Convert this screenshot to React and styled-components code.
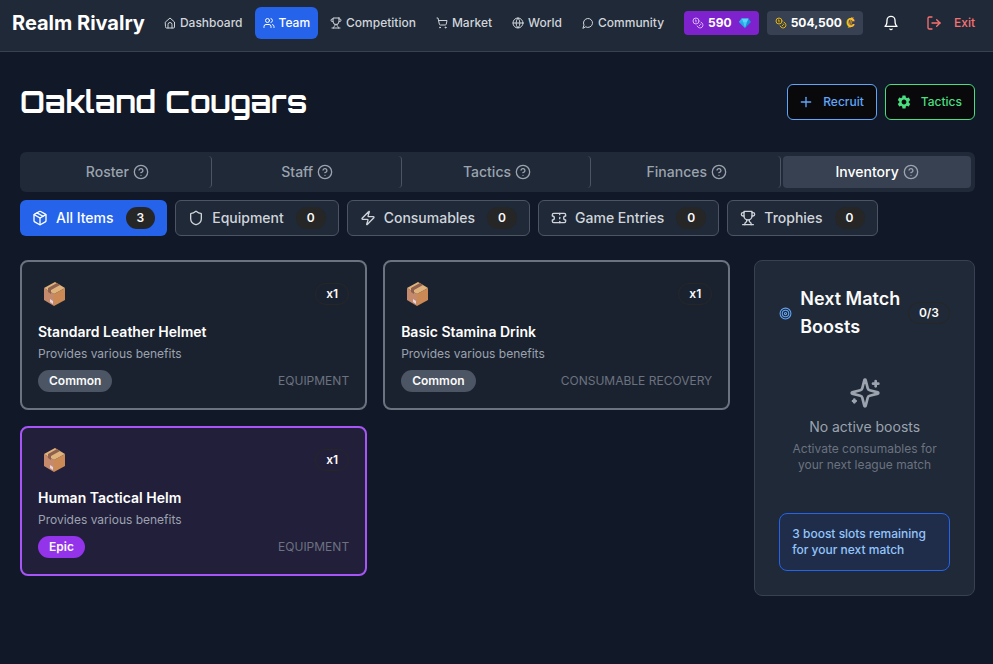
import React from "react";
import styled, { createGlobalStyle, css } from "styled-components";
import {
  Users, ShoppingCart, Globe, Coins, LogOut, Plus, CircleHelp, Package, Shield, Zap, Ticket, Target,
} from "lucide-react";
import { MdSettings } from "react-icons/md";

const GlobalStyle = createGlobalStyle`
  *, *::before, *::after { box-sizing: border-box; }
  body {
    margin: 0;
    background: #111827;
    color: #ffffff;
    font-family: Inter, "Liberation Sans", sans-serif;
    font-size: 12px;
    line-height: 16px;
  }
  h1, h2, h3, p { margin: 0; }
  button { font: inherit; color: inherit; cursor: pointer; }
  svg { flex: none; display: block; }
`;

const TopBar = styled.header`
  display: flex;
  align-items: center;
  padding: 7px 18px 12px 12px;
  background: #1f2937;
  border-bottom: 1px solid #374151;
`;

const Brand = styled.a`
  margin-right: 11px;
  color: #ffffff;
  font-size: 20px;
  font-weight: 700;
  line-height: 28px;
  text-decoration: none;
  white-space: nowrap;
`;

const Nav = styled.nav`
  display: flex;
  gap: 4px;
`;

const NavLink = styled.a`
  display: flex;
  align-items: center;
  gap: 4px;
  height: 32px;
  padding: 0 8px;
  border-radius: 6px;
  background: ${(p) => (p.$active ? "#2563eb" : "transparent")};
  color: ${(p) => (p.$active ? "#ffffff" : "#d1d5db")};
  font-weight: 500;
  text-decoration: none;
`;

const Wallet = styled.div`
  display: flex;
  gap: 8px;
  margin-left: 12px;
`;

const Balance = styled.div`
  display: flex;
  align-items: center;
  gap: 4px;
  height: 24px;
  padding: 0 8px;
  border-radius: 4px;
  background: ${(p) => (p.$premium ? "#7e22ce" : "#374151")};
  font-weight: 700;
  white-space: nowrap;
  & > svg:first-child { color: ${(p) => (p.$premium ? "#d8b4fe" : "#eab308")}; }
  & > svg:last-child { margin-left: 3px; }
`;

const CoinSign = styled.span`
  color: #fbbf24;
  font-weight: 700;
`;

const Account = styled.div`
  display: flex;
  flex: 1;
  align-items: center;
  justify-content: space-between;
  margin-left: 20px;
`;

const PlainButton = styled.button`
  display: flex;
  align-items: center;
  gap: 12px;
  padding: 0;
  border: 0;
  background: none;
  color: ${(p) => (p.$danger ? "#f87171" : "#ffffff")};
  font-weight: 500;
`;

const Main = styled.main`
  padding: 32px 18px 32px 20px;
`;

const TitleRow = styled.div`
  display: flex;
  align-items: center;
  justify-content: space-between;
  margin-bottom: 32px;
`;

const TeamName = styled.h1`
  font-family: Orbitron, "DejaVu Sans", sans-serif;
  font-size: 30px;
  font-weight: 700;
  line-height: 36px;
`;

const Actions = styled.div`
  display: flex;
  gap: 8px;
`;

const ActionButton = styled.button`
  display: flex;
  align-items: center;
  gap: 9px;
  height: 36px;
  padding: 0 12px 0 10px;
  border: 1px solid ${(p) => p.$tone};
  border-radius: 6px;
  background: #09090b;
  color: ${(p) => p.$tone};
  font-weight: 500;
`;

const Tabs = styled.div`
  display: grid;
  grid-template-columns: repeat(5, 1fr);
  gap: 2px;
  padding: 4px;
  border-radius: 6px;
  background: #1f2937;
`;

const Tab = styled.button`
  display: flex;
  align-items: center;
  justify-content: center;
  gap: 4px;
  height: 32px;
  padding: 0;
  border: 0;
  border-radius: 4px;
  background: none;
  color: #9ca3af;
  font-size: 14px;
  font-weight: 500;
  & > svg { color: #9ca3af; }
  ${(p) => p.$active
    ? css`background: #374151; color: #ffffff;`
    : css`border-right: 1px solid #4b5563;`}
`;

const Filters = styled.div`
  display: flex;
  flex-wrap: wrap;
  gap: 8px;
  margin: 8px 0 24px;
`;

const Filter = styled.button`
  display: flex;
  align-items: center;
  gap: 8px;
  height: 36px;
  padding: 0 12px;
  border: ${(p) => (p.$active ? "0" : "1px solid #4b5563")};
  border-radius: 6px;
  background: ${(p) => (p.$active ? "#2563eb" : "#1f2937")};
  color: ${(p) => (p.$active ? "#ffffff" : "#d1d5db")};
  font-size: 14px;
  font-weight: 500;
`;

const Pill = styled.span`
  padding: 2px 10px;
  border: 1px solid ${(p) => p.$border || "transparent"};
  border-radius: 11px;
  background: ${(p) => p.$fill || "transparent"};
  color: #fafafa;
  font-size: 12px;
  font-weight: 600;
  line-height: 16px;
  white-space: nowrap;
`;

const CountPill = styled(Pill)`
  margin-left: 4px;
`;

const Columns = styled.div`
  display: grid;
  grid-template-columns: repeat(4, minmax(0, 1fr));
  align-items: start;
  gap: 24px;
`;

const ItemGrid = styled.section`
  display: grid;
  grid-column: span 3;
  grid-template-columns: repeat(2, minmax(0, 1fr));
  gap: 16px;
`;

const ItemCard = styled.article`
  padding: 16px;
  border: 2px solid ${(p) => (p.$epic ? "#a855f7" : "#6b7280")};
  border-radius: 8px;
  background: ${(p) => (p.$epic ? "#221f3b" : "#1b222f")};
`;

const SplitRow = styled.div`
  display: flex;
  align-items: center;
  justify-content: space-between;
`;

const ItemTop = styled(SplitRow)`
  height: 32px;
  margin-bottom: 12px;
`;

const ItemName = styled.h3`
  margin-bottom: 4px;
  font-size: 14px;
  font-weight: 600;
  line-height: 20px;
`;

const ItemText = styled.p`
  margin-bottom: 8px;
  color: #9ca3af;
`;

const ItemKind = styled.span`
  color: #6b7280;
`;

const Panel = styled.aside`
  padding: 24px;
  border: 1px solid #374151;
  border-radius: 8px;
  background: #1f2937;
`;

const PanelTitle = styled.h2`
  display: flex;
  align-items: center;
  gap: 8px;
  color: #fafafa;
  font-size: 18px;
  font-weight: 600;
  line-height: 28px;
  & > svg { color: #60a5fa; }
`;

const Empty = styled.div`
  display: flex;
  flex-direction: column;
  align-items: center;
  padding: 36px 0 40px;
  color: #9ca3af;
  text-align: center;
`;

const EmptyTitle = styled.p`
  margin: 8px 0 4px;
  font-size: 14px;
  line-height: 20px;
`;

const EmptyText = styled.p`
  color: #6b7280;
`;

const Notice = styled.p`
  padding: 12px;
  border: 1px solid #2563eb;
  border-radius: 8px;
  background: #202d4a;
  color: #93c5fd;
  font-weight: 500;
`;

function LineIcon({ size, children }) {
  return (
    <svg
      width={size} height={size} viewBox="0 0 24 24" fill="none" stroke="currentColor"
      strokeWidth="2" strokeLinecap="round" strokeLinejoin="round" aria-hidden="true"
    >
      {children}
    </svg>
  );
}

function HomeIcon({ size }) {
  return (
    <LineIcon size={size}>
      <path d="M3 10l9-8 9 8v10a2 2 0 0 1-2 2H5a2 2 0 0 1-2-2z" />
      <path d="M8 22v-7a4 4 0 0 1 8 0v7" />
    </LineIcon>
  );
}

function TrophyIcon({ size }) {
  return (
    <LineIcon size={size}>
      <path d="M6 9H4.5a2.5 2.5 0 0 1 0-5H6" />
      <path d="M18 9h1.5a2.5 2.5 0 0 0 0-5H18" />
      <path d="M4 22h16" />
      <path d="M10 14.66V17c0 .55-.47.98-.97 1.21C7.85 18.75 7 20.24 7 22" />
      <path d="M14 14.66V17c0 .55.47.98.97 1.21C16.15 18.75 17 20.24 17 22" />
      <path d="M18 2H6v7a6 6 0 0 0 12 0V2Z" />
    </LineIcon>
  );
}

function ChatIcon({ size }) {
  return <LineIcon size={size}><path d="M7.9 20A9 9 0 1 0 4 16.1L2 22Z" /></LineIcon>;
}

function BellIcon({ size }) {
  return (
    <LineIcon size={size}>
      <path d="M6 8a6 6 0 0 1 12 0c0 7 3 9 3 9H3s3-2 3-9" />
      <path d="M10.3 21a1.94 1.94 0 0 0 3.4 0" />
    </LineIcon>
  );
}

function SparklesIcon({ size }) {
  return (
    <LineIcon size={size}>
      <path d="M9.937 15.5A2 2 0 0 0 8.5 14.063l-6.135-1.582a.5.5 0 0 1 0-.962L8.5 9.936A2 2 0 0 0 9.937 8.5l1.582-6.135a.5.5 0 0 1 .963 0L14.063 8.5A2 2 0 0 0 15.5 9.937l6.135 1.581a.5.5 0 0 1 0 .964L15.5 14.063a2 2 0 0 0-1.437 1.437l-1.582 6.135a.5.5 0 0 1-.963 0z" />
      <path d="M20 3v4" />
      <path d="M22 5h-4" />
      <path d="M4 17v2" />
      <path d="M5 18H3" />
    </LineIcon>
  );
}

function Gem() {
  return (
    <svg width="12" height="12" viewBox="0 0 24 24" aria-hidden="true">
      <path d="M5 3h14l5 7-12 12L0 10z" fill="#1593d8" />
      <path d="M5 3h14l-3 7H8z" fill="#5cd3f7" />
      <path d="M0 10h8l4 12z" fill="#27a9e8" />
      <path d="M8 10h8l-4 12z" fill="#48c6f4" />
      <path d="M5 3l3 7H0z" fill="#2fb4ec" />
    </svg>
  );
}

function Crate() {
  return (
    <svg width="32" height="32" viewBox="0 0 32 32" aria-hidden="true">
      <path d="M6 10l10 6v12L6 22z" fill="#c58a6c" />
      <path d="M27 10l-11 6v12l11-6z" fill="#cb8a55" />
      <path d="M17 4l10 6-11 6-10-6z" fill="#e0b37c" />
      <path d="M19 5l3 2-9 5v4l-3-2v-4z" fill="#8f604d" />
      <path d="M12 21l3 2v3l-3-2z" fill="#e8d5df" />
    </svg>
  );
}

const navItems = [
  ["Dashboard", HomeIcon], ["Team", Users], ["Competition", TrophyIcon],
  ["Market", ShoppingCart], ["World", Globe], ["Community", ChatIcon],
];
const tabs = ["Roster", "Staff", "Tactics", "Finances", "Inventory"];
const filters = [
  ["All Items", Package, 3], ["Equipment", Shield, 0], ["Consumables", Zap, 0],
  ["Game Entries", Ticket, 0], ["Trophies", TrophyIcon, 0],
];
const items = [
  { name: "Standard Leather Helmet", rarity: "Common", kind: "EQUIPMENT" },
  { name: "Basic Stamina Drink", rarity: "Common", kind: "CONSUMABLE RECOVERY" },
  { name: "Human Tactical Helm", rarity: "Epic", kind: "EQUIPMENT" },
];

function Item({ name, rarity, kind }) {
  const epic = rarity === "Epic";
  return (
    <ItemCard $epic={epic}>
      <ItemTop><Crate /><Pill $border="#262626">x1</Pill></ItemTop>
      <ItemName>{name}</ItemName>
      <ItemText>Provides various benefits</ItemText>
      <SplitRow>
        <Pill $fill={epic ? "#9333ea" : "#4b5563"}>{rarity}</Pill>
        <ItemKind>{kind}</ItemKind>
      </SplitRow>
    </ItemCard>
  );
}

export default function App() {
  return (
    <>
      <GlobalStyle />
      <TopBar>
        <Brand href="#">Realm Rivalry</Brand>
        <Nav aria-label="Main">
          {navItems.map(([label, Icon]) => (
            <NavLink key={label} href="#" $active={label === "Team"}>
              <Icon size={12} />{label}
            </NavLink>
          ))}
        </Nav>
        <Wallet>
          <Balance $premium><Coins size={12} />590 <Gem /></Balance>
          <Balance><Coins size={12} />504,500 <CoinSign>₡</CoinSign></Balance>
        </Wallet>
        <Account>
          <PlainButton aria-label="Notifications"><BellIcon size={16} /></PlainButton>
          <PlainButton $danger><LogOut size={16} />Exit</PlainButton>
        </Account>
      </TopBar>
      <Main>
        <TitleRow>
          <TeamName>Oakland Cougars</TeamName>
          <Actions>
            <ActionButton $tone="#60a5fa"><Plus size={16} />Recruit</ActionButton>
            <ActionButton $tone="#4ade80"><MdSettings size={16} />Tactics</ActionButton>
          </Actions>
        </TitleRow>
        <Tabs role="tablist">
          {tabs.map((label) => (
            <Tab key={label} role="tab" aria-selected={label === "Inventory"} $active={label === "Inventory"}>
              {label}<CircleHelp size={16} />
            </Tab>
          ))}
        </Tabs>
        <Filters>
          {filters.map(([label, Icon, count]) => (
            <Filter key={label} $active={label === "All Items"}>
              <Icon size={16} />{label}<CountPill $fill="#262626">{count}</CountPill>
            </Filter>
          ))}
        </Filters>
        <Columns>
          <ItemGrid>
            {items.map((item) => <Item key={item.name} {...item} />)}
          </ItemGrid>
          <Panel>
            <SplitRow>
              <PanelTitle><Target size={13} />Next Match Boosts</PanelTitle>
              <Pill $border="#262626">0/3</Pill>
            </SplitRow>
            <Empty>
              <SparklesIcon size={32} />
              <EmptyTitle>No active boosts</EmptyTitle>
              <EmptyText>Activate consumables for your next league match</EmptyText>
            </Empty>
            <Notice>3 boost slots remaining for your next match</Notice>
          </Panel>
        </Columns>
      </Main>
    </>
  );
}
